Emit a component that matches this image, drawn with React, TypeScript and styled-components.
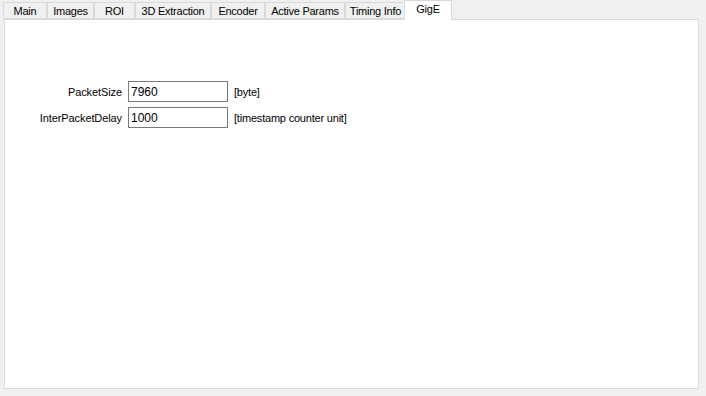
import React from 'react'
import styled, { createGlobalStyle } from 'styled-components'

const GlobalStyle = createGlobalStyle`
	html, body {
		margin: 0;
		padding: 0;
		background: #f0f0f0;
	}
	body {
		font-family: 'Liberation Sans', Arial, sans-serif;
		font-size: 11px;
		color: #000;
	}
`

const Window = styled.div`
	width: 706px;
	height: 396px;
	padding: 0 7px 0 4px;
	box-sizing: border-box;
	background: #f0f0f0;
	display: flex;
	flex-direction: column;
`

const TabStrip = styled.div`
	display: flex;
	align-items: flex-end;
	height: 19px;
	margin-left: -1px;
	position: relative;
	z-index: 1;
`

const Tab = styled.div<{ $w: number; $active?: boolean }>`
	box-sizing: border-box;
	width: ${p => p.$w + (p.$active ? 4 : 0)}px;
	height: ${p => (p.$active ? 20 : 17)}px;
	margin: ${p => (p.$active ? '0 -2px -1px -2px' : '0')};
	border: 1px solid #d9d9d9;
	border-bottom: ${p => (p.$active ? 'none' : '1px solid #d9d9d9')};
	background: ${p => (p.$active ? '#fff' : '#f0f0f0')};
	display: flex;
	align-items: center;
	justify-content: center;
	padding-bottom: ${p => (p.$active ? 4 : 0)}px;
	letter-spacing: -0.25px;
	white-space: nowrap;
	& + & {
		border-left-width: ${p => (p.$active ? 1 : 0)}px;
	}
`

const Panel = styled.div`
	box-sizing: border-box;
	width: 695px;
	height: 370px;
	background: #fff;
	border: 1px solid #dadada;
	padding-top: 61px;
`

const Form = styled.div`
	display: grid;
	grid-template-columns: 117px 100px auto;
	column-gap: 6px;
	row-gap: 5px;
	align-items: center;
`

const Label = styled.label`
	text-align: right;
	white-space: nowrap;
	letter-spacing: -0.1px;
`

const Field = styled.input`
	box-sizing: border-box;
	width: 100px;
	height: 21px;
	border: 1px solid #7a7a7a;
	padding: 0 2px;
	margin: 0;
	font: inherit;
	font-size: 12px;
	color: #000;
	background: #fff;
	outline: none;
`

const Unit = styled.span`
	white-space: nowrap;
	letter-spacing: -0.2px;
`

const tabs = [
	{ name: 'Main', w: 44 },
	{ name: 'Images', w: 47 },
	{ name: 'ROI', w: 41 },
	{ name: '3D Extraction', w: 76 },
	{ name: 'Encoder', w: 54 },
	{ name: 'Active Params', w: 80 },
	{ name: 'Timing Info', w: 61 },
	{ name: 'GigE', w: 44, active: true },
]

const rows = [
	{ label: 'PacketSize', value: '7960', unit: '[byte]' },
	{ label: 'InterPacketDelay', value: '1000', unit: '[timestamp counter unit]' },
]

export const App = () => (
	<Window>
		<GlobalStyle />
		<TabStrip>
			{tabs.map(t => (
				<Tab key={t.name} $w={t.w} $active={t.active}>
					{t.name}
				</Tab>
			))}
		</TabStrip>
		<Panel>
			<Form>
				{rows.map(r => (
					<React.Fragment key={r.label}>
						<Label>{r.label}</Label>
						<Field defaultValue={r.value} />
						<Unit>{r.unit}</Unit>
					</React.Fragment>
				))}
			</Form>
		</Panel>
	</Window>
)

export default App
